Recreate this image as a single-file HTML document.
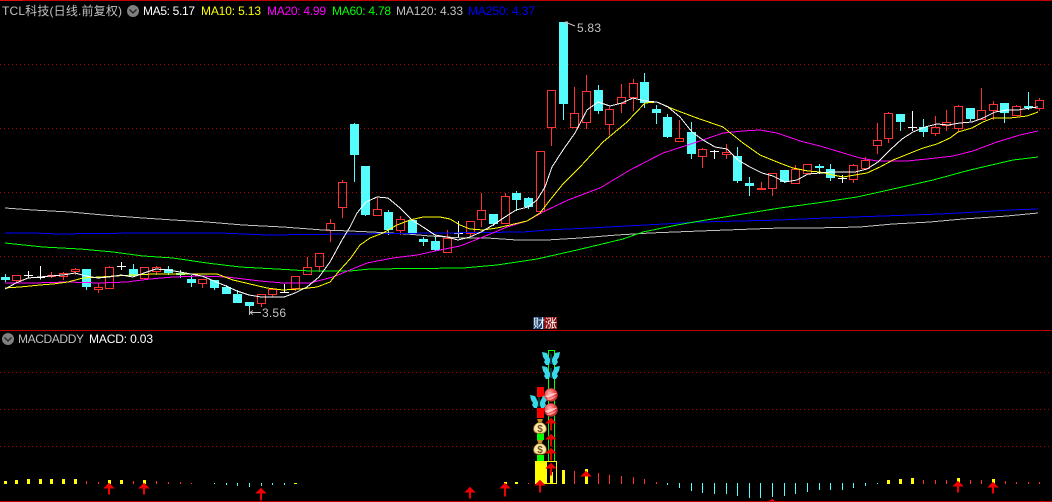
<!DOCTYPE html>
<html><head><meta charset="utf-8"><title>TCL</title>
<style>html,body{margin:0;padding:0;background:#000;width:1052px;height:502px;overflow:hidden}svg{display:block}
text{font-family:"Liberation Sans","WenQuanYi Zen Hei","Noto Sans CJK SC",sans-serif;font-size:12px}</style></head>
<body>
<svg width="1052" height="502" viewBox="0 0 1052 502" xmlns="http://www.w3.org/2000/svg">
<defs>
<radialGradient id="b" cx=".4" cy=".35" r=".75"><stop offset="0" stop-color="#ffb0b0"/><stop offset=".5" stop-color="#f04848"/><stop offset="1" stop-color="#b02020"/></radialGradient>
<radialGradient id="m" cx=".5" cy=".5" r=".6"><stop offset="0" stop-color="#fffbe0"/><stop offset=".7" stop-color="#f8e49c"/><stop offset="1" stop-color="#a07828"/></radialGradient>
<g id="fly"><path d="M-1 0L-4 -6L-9 -7L-8 -2L-6 1L-7 3L-5 6L-2 6L-1 3zM1 0L4 -6L9 -7L8 -2L6 1L7 3L5 6L2 6L1 3z" fill="#38d8e8"/><path d="M0 -5V5" stroke="#0a4a50" stroke-width="1.500"/></g>
<g id="ball"><circle r="6.700" fill="url(#b)"/><path d="M-6 1Q0 -2 6 -2Q2 1 -3 3z" fill="#ffc8c8"/><path d="M-5 4Q0 3 5 1Q2 5 -2 5z" fill="#ff9a9a"/></g>
<g id="bag"><path d="M-3 -8h6l-1.500 3.500h-3z" fill="#c89028"/><path d="M-2 -4.500Q-6.500 -2 -6.500 2Q-6.500 6.500 0 6.500Q6.500 6.500 6.500 2Q6.500 -2 2 -4.500z" fill="url(#m)" stroke="#8a6418" stroke-width=".7"/><text x="0" y="5" text-anchor="middle" fill="#7a4a10" style="font-size:10px;font-weight:bold">$</text></g>
</defs>
<rect width="1052" height="502" fill="#000"/>
<g shape-rendering="crispEdges">
<path d="M0 64.500H1052M0 128.500H1052M0 192.500H1052M0 256.500H1052M0 372.500H1052M0 409.500H1052M0 446.500H1052" stroke="#b00000" stroke-dasharray="1 3" fill="none"/>
<path d="M0 .5H1052M0 330.500H1052M0 501.500H1052" stroke="#c00000"/>
<path d="M0 .5H23" stroke="#e01010"/>

<path fill="#54fcfc" d="M1 277h9v3h-9zM82 269h9v18h-9zM129 269h9v7h-9zM164 269h9v4h-9zM176 273h9v2h-9zM187 279h9v4h-9zM210 280h9v8h-9zM222 287h9v7h-9zM233 294h9v9h-9zM245 302h9v4h-9zM350 124h9v31h-9zM361 166h9v49h-9zM384 212h9v18h-9zM408 220h9v13h-9zM419 239h9v3h-9zM431 241h9v9h-9zM489 214h9v10h-9zM512 193h9v7h-9zM524 198h9v9h-9zM559 22h9v82h-9zM594 90h9v21h-9zM640 82h9v21h-9zM652 109h9v4h-9zM663 117h9v20h-9zM687 132h9v22h-9zM733 156h9v25h-9zM745 183h9v3h-9zM780 170h9v12h-9zM815 166h9v2h-9zM826 169h9v9h-9zM896 114h9v8h-9zM919 127h9v5h-9zM966 108h9v11h-9zM1000 103h9v10h-9zM1024 106h9v2h-9z"/>
<path fill="none" stroke="#54fcfc" d="M5.500 274V282M86.500 287V290M133.500 264V277M168.500 266V275M180.500 270V278M191.500 275V287M214.500 288V290M226.500 285V287M237.500 290V294M249.500 306V315M354.500 123V182M365.500 215V216M388.500 210V235M423.500 237V246M435.500 235V251M493.500 224V226M516.500 191V211M528.500 197V209M563.500 104V120M598.500 85V114M644.500 73V108M656.500 105V124M667.500 114V138M691.500 122V159M737.500 147V183M749.500 177V196M784.500 182V183M819.500 164V174M830.500 164V181M900.500 122V131M923.500 119V137M970.500 119V121M1004.500 113V123M1028.500 92V110"/>
<path fill="none" stroke="#ff3232" d="M12.500 275.500h8v5h-8zM16.500 280.500V283M47.500 275.500h8v1h-8zM51.500 272V275.500M51.500 276.500V278M59.500 273.500h8v3h-8zM63.500 272V273.500M63.500 276.500V280M71.500 269.500h8v2h-8zM75.500 268V269.500M75.500 271.500V275M94.500 287.500h8v2h-8zM98.500 283V287.500M98.500 289.500V293M105.500 267.500h8v21h-8zM109.500 266V267.500M140.500 267.500h8v11h-8zM152.500 267.500h8v4h-8zM156.500 266V267.500M156.500 271.500V275M198.500 279.500h8v4h-8zM202.500 283.500V288M257.500 294.500h8v9h-8zM261.500 303.500V307M268.500 289.500h8v5h-8zM272.500 294.500V297M291.500 276.500h8v12h-8zM295.500 288.500V291M303.500 267.500h8v7h-8zM307.500 257V267.500M315.500 253.500h8v13h-8zM319.500 266.500V272M326.500 223.500h8v7h-8zM330.500 219V223.500M330.500 230.500V242M338.500 182.500h8v25h-8zM342.500 180V182.500M342.500 207.500V218M373.500 209.500h8v6h-8zM377.500 198V209.500M396.500 219.500h8v11h-8zM400.500 216V219.500M400.500 230.500V235M443.500 238.500h8v14h-8zM447.500 230V238.500M466.500 221.500h8v12h-8zM470.500 233.500V237M477.500 210.500h8v9h-8zM481.500 193V210.500M481.500 219.500V227M501.500 196.500h8v27h-8zM505.500 193V196.500M536.500 151.500h8v60h-8zM547.500 90.500h8v37h-8zM551.500 127.500V146M570.500 113.500h8v14h-8zM574.500 87V113.500M582.500 91.500h8v31h-8zM586.500 75V91.500M586.500 122.500V129M605.500 109.500h8v15h-8zM609.500 107V109.500M609.500 124.500V135M617.500 97.500h8v6h-8zM621.500 84V97.500M621.500 103.500V113M629.500 83.500h8v14h-8zM633.500 79V83.500M633.500 97.500V111M675.500 138.500h8v3h-8zM679.500 120V138.500M698.500 149.500h8v7h-8zM702.500 156.500V168M702.500 148V149.500M722.500 152.500h8v2h-8zM726.500 144V152.500M726.500 154.500V159M757.500 188.500h8v1h-8zM761.500 182V188.500M768.500 173.500h8v15h-8zM772.500 188.500V196M791.500 169.500h8v14h-8zM795.500 165V169.500M803.500 164.500h8v9h-8zM849.500 165.500h8v14h-8zM853.500 164V165.500M853.500 179.500V183M861.500 160.500h8v8h-8zM865.500 157V160.500M873.500 140.500h8v5h-8zM877.500 123V140.500M877.500 145.500V154M884.500 113.500h8v25h-8zM888.500 112V113.500M888.500 138.500V143M931.500 127.500h8v6h-8zM935.500 116V127.500M935.500 133.500V136M942.500 122.500h8v3h-8zM946.500 110V122.500M946.500 125.500V131M954.500 106.500h8v22h-8zM958.500 105V106.500M958.500 128.500V132M977.500 110.500h8v9h-8zM981.500 88V110.500M989.500 104.500h8v6h-8zM993.500 101V104.500M993.500 110.500V120M1012.500 106.500h8v9h-8zM1016.500 105V106.500M1035.500 100.500h8v8h-8zM1039.500 98V100.500M1039.500 108.500V111"/>
<path fill="none" stroke="#fff" d="M24 275.500h9M28.500 271V278.500M36 277.500h9M40.500 266V279.500M117 266.500h9M121.500 262V270M280 292.500h9M284.500 284V293M454 233.500h9M458.500 221V238M710 151.500h9M714.500 150V159M838 178.500h9M842.500 175V183M908 127.500h9M912.500 111V131"/>

<g fill="none">
<polyline stroke="#c0c0c0" points="5,208 33,210 70,212 103,215 143,218 173,220 207,222 243,225 283,227 323,230 350,231 372,232 407,234 430,236 463,238 487,238 517,240 547,240 580,238 617,235 650,233 700,231 780,228 813,228 860,227 893,224 930,222 963,219 1007,216 1038,213"/>
<polyline stroke="#0000ff" points="5,233 33,233 57,234 138,233 220,233 267,235 350,234 440,233 523,232 547,230 590,228 627,226 700,222 780,220 825,218 883,216 940,214 977,212 1010,210 1038,209"/>
<polyline stroke="#00ff00" points="5,243 43,247 80,249 113,252 143,256 173,258 207,263 240,267 277,269 310,271 350,271 370,269 463,268 497,265 537,259 577,250 623,239 643,232 677,225 700,221 780,208 817,203 857,197 893,189 933,180 970,170 1013,160 1038,157"/>
<polyline stroke="#ff00ff" points="5,283 33,283 67,282 100,283 127,282 150,279 173,277 200,276 227,277 260,281 283,283 310,283 333,277 350,270 367,263 393,258 417,255 440,250 460,246 483,237 507,227 527,221 543,212 568,200 600,188 630,170 663,153 697,142 723,133 743,131 760,130 777,133 800,141 820,146 840,152 860,158 877,161 907,161 927,159 953,156 973,151 997,142 1020,135 1038,131"/>
<polyline stroke="#ffff00" points="5,288 20,287 40,285 53,284 68,282 83,278 100,277 115,276 133,275 153,274 173,274 192,274 217,274 233,280 250,284 267,288 283,290 300,289 317,287 330,282 340,270 350,259 360,245 370,238 383,233 397,225 410,220 423,217 440,217 450,219 460,225 470,229 483,230 497,228 510,225 527,221 540,213 550,200 563,184 580,167 603,142 627,122 645,103 657,102 673,109 697,118 723,127 743,143 760,155 777,162 793,168 808,171 820,172 833,175 843,177 855,175 867,173 880,167 893,160 908,154 923,148 937,144 950,138 958,132 972,128 983,122 993,118 1010,118 1027,116 1038,112"/>
<polyline stroke="#ffffff" points="5,289 16,283 28,278 40,277 51,276 63,275 75,273 86,276 98,278 109,277 121,275 133,277 144,273 156,269 168,270 180,272 191,274 202,276 214,281 226,286 237,291 249,295 261,297 272,297 284,297 295,293 307,287 319,277 330,262 342,240 350,227 357,213 366,202 377,197 388,198 400,208 412,220 423,227 435,235 447,237 458,240 470,237 481,232 493,225 505,217 516,210 528,207 537,200 545,187 552,167 563,150 575,133 587,110 598,102 610,106 622,103 633,98 645,101 657,102 668,107 680,117 692,132 703,140 715,147 727,149 738,160 750,167 762,173 773,176 785,182 797,180 808,174 820,173 832,172 843,172 855,172 867,169 878,162 890,150 902,139 913,132 925,127 937,124 948,125 960,123 972,122 983,118 995,112 1007,110 1018,110 1030,108 1038,107"/>
</g>

<path fill="#ffff00" d="M4 481h3v3h-3zM15 480h3v4h-3zM27 479h3v5h-3zM39 479h3v5h-3zM50 479h3v5h-3zM62 479h3v5h-3zM74 479h3v5h-3zM108 480h3v4h-3zM120 480h3v4h-3zM143 480h3v4h-3zM294 483h3v1h-3zM504 482h3v2h-3zM515 482h3v2h-3zM550 472h3v12h-3zM562 470h3v14h-3zM585 469h3v15h-3zM887 480h3v4h-3zM899 479h3v5h-3zM911 478h3v6h-3zM957 478h3v6h-3zM992 479h3v5h-3zM535 461h11v23h-11z"/>
<path fill="none" stroke="#ffff00" d="M546.500 461.500h10v22h-10z"/>
<path fill="none" stroke="#ff3232" d="M86.500 481V484M98.500 482V484M133.500 481V484M156.500 481V484M168.500 482V484M180.500 482V484M191.500 483V484M528.500 483V484M574.500 471V484M598.500 473V484M609.500 475V484M621.500 476V484M633.500 477V484M644.500 479V484M656.500 482V484M923.500 480V484M935.500 480V484M946.500 480V484M970.500 480V484M981.500 480V484M1005.500 481V484M1016.500 482V484M1028.500 482V484M1039.500 482V484"/>
<path fill="none" stroke="#54fcfc" d="M214.500 483V484M226.500 483V485M237.500 483V486M249.500 483V487M261.500 483V486M272.500 483V485M284.500 483V485M667.500 483V485M679.500 483V488M691.500 483V491M702.500 483V493M714.500 483V494M726.500 483V494M737.500 483V496M749.500 483V498M760.500 483V498M772.500 483V497M784.500 483V496M795.500 483V494M807.500 483V492M819.500 483V490M830.500 483V490M842.500 483V490M853.500 483V488M865.500 483V486M877.500 483V484"/>

<path fill="#ff0000" d="M537 387h7v10h-7zM537 408h7v10h-7z"/>
<path fill="#00ff00" d="M537 433h7v7h-7zM537 455h7v6h-7z"/>
<path fill="none" stroke="#00ff00" d="M548.500 461V350.500H554.500V461"/>
<path fill="#f00000" d="M109 482.500l5.500 6h-4.500v6h-2v-6h-4.500zM144 482.500l5.500 6h-4.500v6h-2v-6h-4.500zM261 487.500l5.500 6h-4.500v7h-2v-7h-4.500zM470 486.500l5.500 6h-4.500v6h-2v-6h-4.500zM505 482.500l5.500 6h-4.500v8h-2v-8h-4.500zM540 479.500l5.500 6h-4.500v7h-2v-7h-4.500zM586 470.500l5.500 6h-11zM958 480.500l5.500 6h-4.500v6h-2v-6h-4.500zM993 481.500l5.500 6h-4.500v6h-2v-6h-4.500zM772 499l3 2h-6zM551 417.500l5.500 6h-4.500v7h-2v-7h-4.500zM551 433.500l5.500 6h-4.500v7h-2v-7h-4.500zM551 447.500l5.500 6h-4.500v7h-2v-7h-4.500zM551 462.500l5.500 6h-4.500v7h-2v-7h-4.500z"/>
</g>

<use href="#fly" x="551" y="359"/><use href="#fly" x="551" y="373"/><use href="#fly" x="539" y="402"/>
<use href="#ball" x="551" y="395"/><use href="#ball" x="551" y="410"/>
<use href="#bag" x="540" y="427"/><use href="#bag" x="540" y="448"/>

<text x="2" y="15" fill="#c0c0c0" textLength="120">TCL科技(日线.前复权)</text>
<circle cx="133" cy="11" r="6" fill="#808080"/><path d="M129.500 9.500L133 13L136.500 9.500" fill="none" stroke="#222" stroke-width="1.300"/>
<text x="143" y="15" fill="#fff" textLength="52">MA5: 5.17</text>
<text x="201" y="15" fill="#ffff00" textLength="60">MA10: 5.13</text>
<text x="267" y="15" fill="#ff00ff" textLength="59">MA20: 4.99</text>
<text x="332" y="15" fill="#00ff00" textLength="59">MA60: 4.78</text>
<text x="396" y="15" fill="#c0c0c0" textLength="67">MA120: 4.33</text>
<text x="468" y="15" fill="#0000ff" textLength="67">MA250: 4.37</text>

<text x="577" y="32" fill="#c0c0c0" textLength="24">5.83</text>
<path d="M565 22L575 26M565 22l3 0M565 22l2 3" stroke="#c0c0c0" fill="none"/>
<text x="262" y="317" fill="#c0c0c0" textLength="24">3.56</text>
<path d="M249.500 308V315M250 312.500H261M250 312.500l3 -2M250 312.500l3 2" stroke="#c0c0c0" fill="none"/>

<rect x="533" y="317" width="11" height="12" fill="#1a3f70"/><rect x="544" y="317" width="13" height="12" fill="#8c1010"/>
<text x="533" y="327.500" fill="#fff" style="font-size:12px">财</text><text x="545" y="327.500" fill="#fff" style="font-size:12px">涨</text>

<circle cx="8" cy="339" r="6" fill="#808080"/><path d="M4.500 337.500L8 341L11.500 337.500" fill="none" stroke="#222" stroke-width="1.300"/>
<text x="18" y="343" fill="#c0c0c0" textLength="66">MACDADDY</text>
<text x="89" y="343" fill="#fff" textLength="64">MACD: 0.03</text>
</svg>
</body></html>
